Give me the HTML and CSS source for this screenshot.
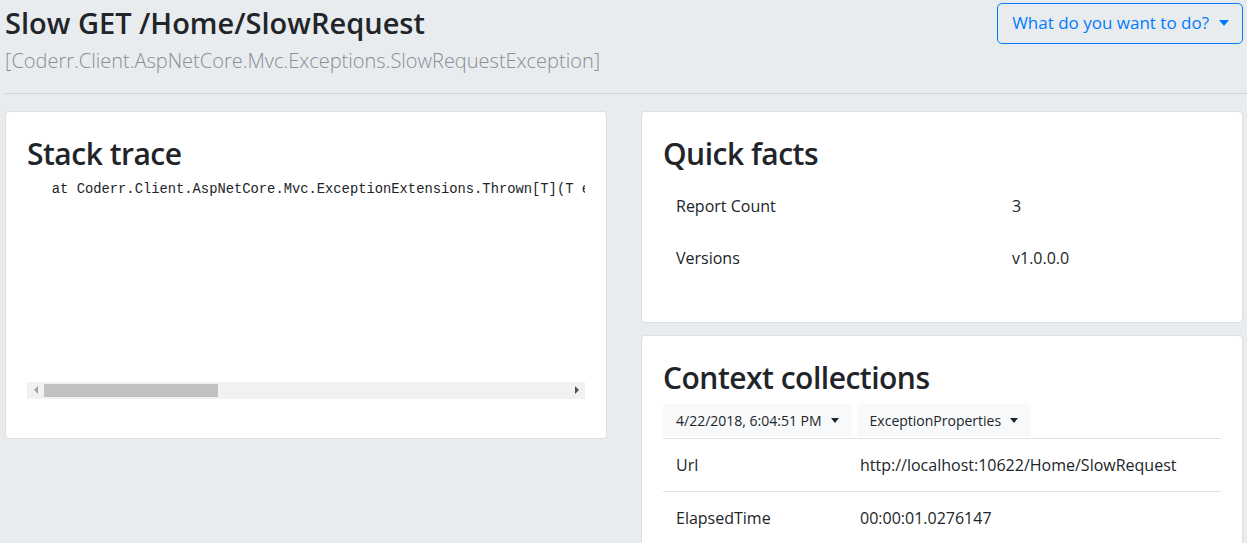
FILE: index.html
```html
<!DOCTYPE html>
<html lang="en">
<head>
<meta charset="utf-8">
<title>Slow GET /Home/SlowRequest</title>
<link rel="stylesheet" href="styles.css">
</head>
<body>
<div class="page">
  <header class="header">
    <div class="heading-block">
      <h1 class="title">Slow GET /Home/SlowRequest</h1>
      <div class="subtitle">[Coderr.Client.AspNetCore.Mvc.Exceptions.SlowRequestException]</div>
    </div>
    <button class="btn-action" type="button">What do you want to do?<span class="caret"></span></button>
  </header>
  <hr class="rule">
  <div class="grid">
    <section class="card">
      <h2 class="card-title">Stack trace</h2>
      <pre class="trace">   at Coderr.Client.AspNetCore.Mvc.ExceptionExtensions.Thrown[T](T exception)</pre>
      <div class="hscroll">
        <div class="sb-btn"><span class="tri-left"></span></div>
        <div class="sb-thumb"></div>
        <div class="sb-track"></div>
        <div class="sb-btn"><span class="tri-right"></span></div>
      </div>
    </section>
    <div class="col-right">
      <section class="card card-facts">
        <h2 class="card-title">Quick facts</h2>
        <table class="facts">
          <tr><td class="k k-wide">Report Count</td><td>3</td></tr>
          <tr><td class="k k-wide">Versions</td><td>v1.0.0.0</td></tr>
        </table>
      </section>
      <section class="card card-context">
        <h2 class="card-title">Context collections</h2>
        <div class="toolbar">
          <button class="btn-light" type="button">4/22/2018, 6:04:51 PM<span class="caret caret-sm"></span></button>
          <button class="btn-light" type="button">ExceptionProperties<span class="caret caret-sm"></span></button>
        </div>
        <table class="props">
          <tr><td class="k k-narrow">Url</td><td>http://localhost:10622/Home/SlowRequest</td></tr>
          <tr><td class="k k-narrow">ElapsedTime</td><td>00:00:01.0276147</td></tr>
        </table>
      </section>
    </div>
  </div>
</div>
</body>
</html>
```

FILE: styles.css
```css
html, body {
  margin: 0;
  padding: 0;
}
body {
  background: #e9ecef;
  color: #212529;
  font-family: "Open Sans", "Noto Sans", "Liberation Sans", sans-serif;
  font-size: 16px;
  line-height: 1.5;
}
.page {
  padding: 0 4px 0 5px;
}
.header {
  display: flex;
  justify-content: space-between;
  align-items: flex-start;
}
.title {
  margin: 6px 0 0;
  font-size: 29px;
  font-weight: 600;
  line-height: 1.2;
}
.subtitle {
  margin-top: 8px;
  font-size: 20px;
  font-weight: 300;
  color: #868e96;
  line-height: 1.2;
}
.btn-action {
  margin-top: 3px;
  background: transparent;
  border: 1px solid #007bff;
  border-radius: 5px;
  color: #007bff;
  font-family: inherit;
  font-size: 17px;
  line-height: 24px;
  padding: 7px 13px 8px 14px;
  display: inline-flex;
  align-items: center;
}
.caret {
  display: inline-block;
  margin-left: 10px;
  border-top: 6px solid currentColor;
  border-left: 5px solid transparent;
  border-right: 5px solid transparent;
}
.caret-sm {
  margin-left: 9px;
  border-top-width: 5px;
  border-left-width: 4px;
  border-right-width: 4px;
}
.rule {
  border: 0;
  border-top: 1px solid rgba(0, 0, 0, 0.1);
  margin: 20px -4px 17px 0;
}
.grid {
  display: grid;
  grid-template-columns: minmax(0, 1fr) minmax(0, 1fr);
  column-gap: 34px;
  align-items: start;
}
.col-right {
  display: flex;
  flex-direction: column;
  gap: 12px;
  min-width: 0;
}
.card {
  background: #fff;
  border: 1px solid rgba(0, 0, 0, 0.125);
  border-radius: 4px;
  padding: 20px 21px;
  min-width: 0;
}
.card-title {
  margin: 3px 0 7px;
  font-size: 30px;
  font-weight: 600;
  letter-spacing: -0.5px;
  line-height: 38px;
}
.trace {
  margin: 0;
  height: 202px;
  overflow: hidden;
  white-space: pre;
  font-family: "Liberation Mono", "DejaVu Sans Mono", monospace;
  font-size: 13.8px;
  line-height: 20px;
  color: #212529;
}
.hscroll {
  display: flex;
  height: 17px;
  background: #f1f1f1;
  margin-bottom: 19px;
}
.sb-btn {
  width: 17px;
  flex: none;
  display: flex;
  align-items: center;
  justify-content: center;
}
.sb-thumb {
  width: 174px;
  flex: none;
  margin: 2px 0;
  background: #c1c1c1;
}
.sb-track {
  flex: 1;
}
.tri-left {
  border-right: 4px solid #a3a3a3;
  border-top: 4px solid transparent;
  border-bottom: 4px solid transparent;
}
.tri-right {
  border-left: 4px solid #505050;
  border-top: 4px solid transparent;
  border-bottom: 4px solid transparent;
}
table {
  border-collapse: collapse;
  width: 100%;
}
td {
  padding: 14px 13px;
  line-height: 24px;
  vertical-align: top;
}
.facts {
  margin: 2px 0 18px;
}
.k-wide {
  width: 310px;
}
.k-narrow {
  width: 158px;
}
.toolbar {
  display: flex;
  gap: 5px;
}
.btn-light {
  background: #f8f9fa;
  border: 1px solid #f8f9fa;
  border-radius: 4px;
  color: #212529;
  font-family: inherit;
  font-size: 14px;
  line-height: 21px;
  padding: 5px 12px;
  display: inline-flex;
  align-items: center;
}
.props {
  margin-top: 1px;
}
.props td {
  border-top: 1px solid #dee2e6;
}
```
